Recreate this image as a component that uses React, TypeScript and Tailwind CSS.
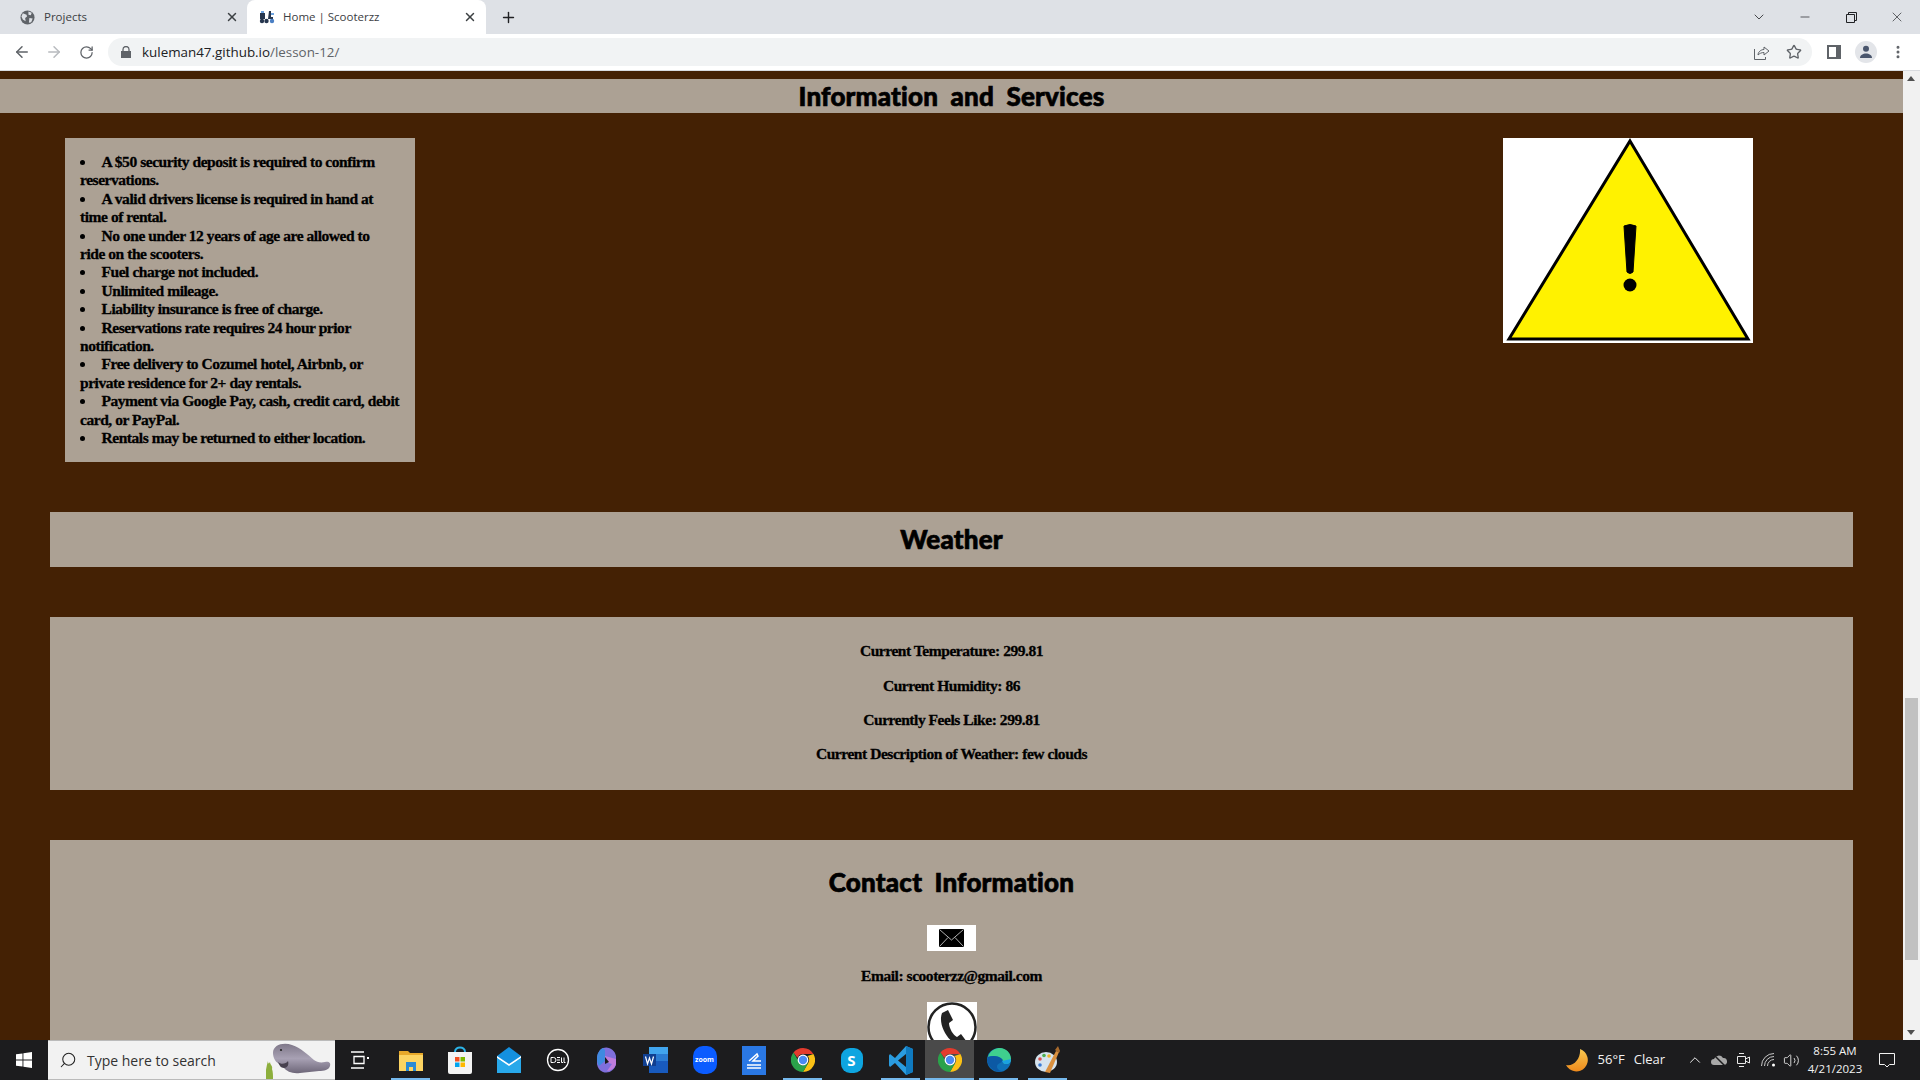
import React from 'react';
import {
  ArrowLeft,
  ArrowRight,
  ChevronDown,
  ChevronUp,
  Minus,
  MoreVertical,
  Plus,
  RotateCw,
  Search,
  Star,
  Volume2,
  X,
} from 'lucide-react';

const rules = [
  'A $50 security deposit is required to confirm reservations.',
  'A valid drivers license is required in hand at time of rental.',
  'No one under 12 years of age are allowed to ride\u00a0on the scooters.',
  'Fuel charge not included.',
  'Unlimited mileage.',
  'Liability insurance is free of charge.',
  'Reservations rate requires 24 hour prior notification.',
  'Free delivery to Cozumel hotel, Airbnb, or private residence for 2+ day rentals.',
  'Payment via Google Pay, cash, credit card, debit card, or PayPal.',
  'Rentals may be returned to either location.',
];

const weather = [
  'Current Temperature: 299.81',
  'Current Humidity: 86',
  'Currently Feels Like: 299.81',
  'Current Description of Weather: few clouds',
];

function ChromeIcon() {
  return (
    <svg width="24" height="24" viewBox="0 0 24 24">
      <path d="M12 0a12 12 0 0 1 10.400 6H12a6 6 0 0 0-5.600 3.800L2.500 4.600A12 12 0 0 1 12 0z" fill="#e33b2e" />
      <path d="M22.400 6A12 12 0 0 1 12 24l5.200-9A6 6 0 0 0 16.600 8z" fill="#fbc116" />
      <path d="M12 24A12 12 0 0 1 2.500 4.600l5 8.400a5 5 0 0 0 5 4.600l4.700-2.600z" fill="#2aa24a" />
      <circle cx="12" cy="12" r="5.400" fill="#fff" />
      <circle cx="12" cy="12" r="4.200" fill="#4a8af4" />
    </svg>
  );
}

function TaskIcon({ children, open, active }: { children: React.ReactNode; open?: boolean; active?: boolean }) {
  return (
    <div className={`relative flex h-10 w-[49px] items-center justify-center ${active ? 'bg-[#4a4a4a]' : ''}`}>
      {children}
      {open && <div className={`absolute bottom-0 h-[2px] bg-[#76b9ed] ${active ? 'inset-x-0' : 'inset-x-[5px]'}`} />}
    </div>
  );
}

function BrowserChrome() {
  return (
    <div className="shrink-0 font-['Open_Sans',sans-serif]">
      <div className="flex h-[34px] items-end bg-[#dee1e6] text-[11.500px] text-[#3c4043]">
        <div className="flex h-[34px] w-[247px] items-center pl-[20px] pr-[8px]">
          <svg width="15" height="15" viewBox="0 0 16 16">
            <circle cx="8" cy="8" r="7.500" fill="#5f6368" />
            <path d="M3 3.500 7 5l.5 2-2 1.500L6 12l-3-2-1.500-3zM9 1.500l3.500 1.500-1 2.500-2.500-.5zM10 8.500l3.500.5-1.500 4-2.500.5z" fill="#dee1e6" />
          </svg>
          <span className="ml-[9px] flex-1">Projects</span>
          <X size={14} strokeWidth={2.5} className="text-[#3c4043]" />
        </div>
        <div className="flex h-[34px] w-[239px] items-center rounded-t-[8px] bg-white pl-[12px] pr-[9px]">
          <svg width="16" height="14" viewBox="0 0 16 14">
            <path d="M1 3h5v6H1z" fill="#26364f" />
            <path d="M2 1h3v2H2z" fill="#6ea3e0" />
            <path d="M9 9h5V7h-2V1h-2z" fill="#26364f" />
            <path d="M12 3h3v2h-3z" fill="#6ea3e0" />
            <circle cx="3" cy="11" r="2.200" fill="#26364f" />
            <circle cx="7.500" cy="11" r="2.200" fill="#26364f" />
            <circle cx="13" cy="11" r="2.200" fill="#4a7fc4" />
          </svg>
          <span className="ml-[8px] flex-1">Home | Scooterzz</span>
          <X size={14} strokeWidth={2.5} className="text-[#3c4043]" />
        </div>
        <div className="ml-[14px] flex h-[34px] items-center">
          <Plus size={17} strokeWidth={2} className="text-[#202124]" />
        </div>
        <div className="ml-auto flex h-[34px] items-center text-[#202124]">
          <ChevronDown size={16} strokeWidth={1.2} className="mr-[31px]" />
          <Minus size={14} strokeWidth={1.2} className="mr-[33.500px]" />
          <svg width="11" height="11" viewBox="0 0 11 11" className="mr-[32.500px]" fill="none" stroke="#202124">
            <path d="M.5 2.500h8v8h-8zM2.500 2.500v-2h8v8h-2" />
          </svg>
          <X size={16} strokeWidth={1} className="mr-[15px]" />
        </div>
      </div>
      <div className="flex h-[37px] items-center border-b border-[#d9dbdf] bg-white">
        <ArrowLeft size={18} strokeWidth={2} className="ml-[13px] text-[#5f6368]" />
        <ArrowRight size={18} strokeWidth={2} className="ml-[14px] text-[#b8bbbf]" />
        <RotateCw size={15} strokeWidth={2} className="ml-[16px] text-[#5f6368]" />
        <div className="ml-[14px] flex h-[28px] flex-1 items-center rounded-full bg-[#f1f3f4]">
          <svg width="10" height="12" viewBox="0 0 10 12" className="ml-[13px]" fill="#5f6368">
            <path d="M0 5h10v7H0z" />
            <path d="M2 5V3.500a3 3 0 0 1 6 0V5" fill="none" stroke="#5f6368" strokeWidth="1.300" />
          </svg>
          <span className="ml-[11px] text-[13.400px] text-[#202124]">
            kuleman47.github.io<span className="text-[#5f6368]">/lesson-12/</span>
          </span>
          <svg width="16" height="15" viewBox="0 0 16 15" fill="none" stroke="#5f6368" className="ml-auto">
            <path d="M.5 4v10.500h11V12M4 10c0-3 3-5.500 6-5.500V2l5 4-5 4V7.500C7.500 7.500 5.500 8.500 4 10z" />
          </svg>
          <Star size={16} strokeWidth={2} className="ml-[16px] mr-[10px] text-[#5f6368]" />
        </div>
        <svg width="14" height="14" viewBox="0 0 14 14" className="ml-[15px]">
          <path d="M0 0h14v14H0z" fill="#5f6368" />
          <path d="M2 2h7v10H2z" fill="#fff" />
        </svg>
        <div className="ml-[14px] flex h-[22px] w-[22px] items-center justify-center rounded-full bg-[#e3e5e9]">
          <svg width="14" height="14" viewBox="0 0 14 14" fill="#4a566d">
            <circle cx="7" cy="3.800" r="3" />
            <path d="M1 13c0-3 3-4.500 6-4.500s6 1.500 6 4.500z" />
          </svg>
        </div>
        <MoreVertical size={16} strokeWidth={2.5} className="ml-[13px] mr-[14px] text-[#5f6368]" />
      </div>
    </div>
  );
}

function WarningSign() {
  return (
    <svg viewBox="0 0 250 205" className="ml-auto mr-[150px] h-[205px] w-[250px] shrink-0 bg-white">
      <polygon points="127,3 245,201 6,201" fill="#fff200" stroke="#000" strokeWidth="3" />
      <path d="M121 88q6-3 12 0l-3 46q-3 3-6 0z" fill="#000" stroke="#000" strokeWidth="1" />
      <circle cx="127" cy="147" r="6.500" fill="#000" />
    </svg>
  );
}

function Page() {
  const heading = "font-['Lato',sans-serif] font-black tracking-[0.2px] [word-spacing:6px] text-black [-webkit-text-stroke:0.7px_#000]";
  return (
    <div className="min-w-0 flex-1 overflow-hidden bg-[#442104] pt-[8px] font-['Liberation_Serif',serif] text-[15.500px] font-bold leading-[18.400px] tracking-[-0.45px] text-black [-webkit-text-stroke:0.3px_#000]">
      <div className={`flex h-[34px] items-center justify-center bg-[#aca194] text-[26px] ${heading}`}>
        Information and Services
      </div>

      <div className="mt-[25px] flex items-start pl-[65px]">
        <ul className="w-[350px] shrink-0 list-inside list-disc bg-[#aca194] px-[15px] pb-[14.600px] pt-[15px]">
          {rules.map((rule) => (
            <li key={rule}>{rule}</li>
          ))}
        </ul>
        <WarningSign />
      </div>

      <div className={`mx-[50px] mt-[50px] flex h-[55px] items-center justify-center bg-[#aca194] text-[26px] ${heading}`}>
        Weather
      </div>

      <div className="mx-[50px] mt-[50px] flex h-[173px] flex-col items-center gap-[16px] bg-[#aca194] pt-[25px]">
        {weather.map((line) => (
          <p key={line}>{line}</p>
        ))}
      </div>

      <div className="mx-[50px] mt-[50px] flex flex-col items-center bg-[#aca194] pt-[28px]">
        <h2 className={`text-[26px] leading-[28px] ${heading}`}>Contact Information</h2>
        <div className="mt-[29px] flex h-[26px] w-[49px] items-center justify-center bg-white">
          <svg width="25" height="18" viewBox="0 0 25 18">
            <path d="M0 0h25v18H0z" fill="#000" />
            <path d="M.5.500 12.500 11 24.500.500M.5 17.500 9 8.500M24.500 17.500 16 8.500" fill="none" stroke="#ddd" strokeWidth="0.800" />
          </svg>
        </div>
        <p className="mt-[16px]">Email: scooterzz@gmail.com</p>
        <div className="mt-[16px] h-[50px] w-[50px] shrink-0 bg-white">
          <svg width="50" height="50" viewBox="0 0 50 50">
            <circle cx="25" cy="25" r="23.500" fill="#fff" stroke="#222" strokeWidth="2.500" />
            <path d="M15 11l6-3 5 10-4 3c0 5 4 12 8 14l4-3 6 8-5 4C24 44 10 24 15 11z" fill="#222" />
          </svg>
        </div>
      </div>
    </div>
  );
}

function Scrollbar() {
  return (
    <div className="relative w-[17px] shrink-0 bg-[#f1f1f1]">
      <div className="absolute left-[4px] top-[5px] h-0 w-0 border-x-[4px] border-b-[5px] border-x-transparent border-b-[#505050]" />
      <div className="absolute left-[2px] right-[2px] top-[627px] h-[262px] bg-[#c1c1c1]" />
      <div className="absolute bottom-[5px] left-[4px] h-0 w-0 border-x-[4px] border-t-[5px] border-x-transparent border-t-[#505050]" />
    </div>
  );
}

function Taskbar() {
  return (
    <div className="flex h-10 shrink-0 items-center bg-[#1c1c1e] font-['Open_Sans',sans-serif] text-white">
      <div className="flex h-10 w-[48px] items-center justify-center">
        <svg width="16" height="16" viewBox="0 0 16 16" fill="#fff">
          <path d="M0 2.300 6.500 1.400v6.200H0zM7.400 1.300 16 0v7.600H7.400zM0 8.400h6.500v6.200L0 13.700zM7.400 8.400H16V16l-8.600-1.300z" />
        </svg>
      </div>
      <div className="flex h-10 w-[287px] items-center border-y border-[#bbb] bg-[#f2f2f2] pl-[11px] text-[14px] text-[#333]">
        <Search size={18} strokeWidth={1.4} className="-scale-x-100 text-[#222]" />
        <span className="ml-[10px]">Type here to search</span>
        <svg width="66" height="38" viewBox="0 0 66 38" className="ml-auto mr-[3px] self-end">
          <defs>
            <linearGradient id="manatee" x1="0" y1="0" x2="0" y2="1">
              <stop offset="0" stopColor="#7f7889" />
              <stop offset="0.5" stopColor="#a8a1b4" />
              <stop offset="1" stopColor="#6d6678" />
            </linearGradient>
          </defs>
          <path d="M0 38c-1-5 0-11 2-18 0 3 1 3 2 1 0 3 3 4 2 7 1 3 1 6 1 10z" fill="#8cae3c" />
          <path d="M7 12C7 4 17 1 26 4c9 3 15 9 22 15 3 2 6 3 11 2 4-1 6 1 5 4-1 4-6 5-11 5-6 1-13 1-19 2-7 1-13-1-17-6-2 1-3-1-3-3-4-1-7-6-7-11z" fill="url(#manatee)" />
          <path d="M12 21c3 3 8 2 10-1 1 3 0 7-4 7-3 0-5-3-6-6z" fill="#47414f" />
          <circle cx="15" cy="9" r="1.100" fill="#222" />
        </svg>
      </div>
      <div className="flex h-10 w-[51px] items-center justify-center pr-[2px]">
        <svg width="18" height="18" viewBox="0 0 18 18" fill="none" stroke="#fff" strokeWidth="1.300">
          <path d="M0 1h13M3 5.500h10v7H3zM0 17h13" />
          <path d="M16 6h2v2h-2z" fill="#fff" stroke="none" />
        </svg>
      </div>
      <TaskIcon open>
        <svg width="24" height="22" viewBox="0 0 24 22">
          <path d="M0 2h9l2 2h13v18H0z" fill="#e8a92a" />
          <path d="M0 6h24v16H0z" fill="#fcd462" />
          <path d="M7 13h10v9h-3v-4h-4v4H7z" fill="#2a8ad4" />
        </svg>
      </TaskIcon>
      <TaskIcon>
        <svg width="24" height="28" viewBox="0 0 24 28">
          <path d="M7 6c0-6 10-6 10 0" fill="none" stroke="#2bb4e8" strokeWidth="2" />
          <path d="M0 6h24v20a2 2 0 0 1-2 2H2a2 2 0 0 1-2-2z" fill="#f3f3f3" />
          <path d="M7 11h4.500v4.500H7z" fill="#f25022" />
          <path d="M12.500 11H17v4.500h-4.500z" fill="#7fba00" />
          <path d="M7 16.500h4.500V21H7z" fill="#00a4ef" />
          <path d="M12.500 16.500H17V21h-4.500z" fill="#ffb900" />
        </svg>
      </TaskIcon>
      <TaskIcon>
        <svg width="24" height="26" viewBox="0 0 24 26">
          <path d="M0 9 12 0l12 9v17H0z" fill="#1490df" />
          <path d="M0 9l12 8 12-8 0 2-12 9-12-9z" fill="#fff" />
          <path d="M0 11l12 8 12-8v15H0z" fill="#28a8ea" />
        </svg>
      </TaskIcon>
      <TaskIcon>
        <svg width="24" height="24" viewBox="0 0 24 24">
          <circle cx="12" cy="12" r="10.500" fill="none" stroke="#fff" strokeWidth="1.300" />
          <path d="M5 9.500h2.500a2.500 2.500 0 0 1 0 5H5zM11 9.500h3M11 12h3M11 14.500h3M15.500 9.500v5h1.500M18 9.500v5h1.500" fill="none" stroke="#fff" strokeWidth="1" />
        </svg>
      </TaskIcon>
      <TaskIcon>
        <svg width="20" height="26" viewBox="0 0 20 26">
          <path d="M6 1c6-2 12 2 13 8v8c-1 6-7 10-13 8C1 23-1 17 0 12 0 7 2 3 6 1z" fill="#7f6fdc" />
          <path d="M6 1C2 3 0 7 0 12c0 3 1 5 2 7l6-5V3z" fill="#3f8ae0" />
          <path d="M8 9l11 3v5c-1 4-5 7-9 7l5-7-7-2z" fill="#c07cdc" />
          <path d="M8 10l4 5-4 2z" fill="#1c1c1e" />
        </svg>
      </TaskIcon>
      <TaskIcon>
        <svg width="25" height="26" viewBox="0 0 25 26">
          <path d="M6 0h19v26H6z" fill="#185abd" />
          <path d="M6 0h19v7H6z" fill="#41a5ee" />
          <path d="M6 7h19v7H6z" fill="#2b7cd3" />
          <path d="M0 7h13v12H0z" fill="#103f91" />
          <path d="M2.500 9.500 4.500 17 6.500 11l2 6 2-7.500" fill="none" stroke="#fff" strokeWidth="1.200" />
        </svg>
      </TaskIcon>
      <TaskIcon>
        <div className="flex h-[28px] w-[24px] items-center justify-center rounded-[10px] bg-[#0b5cff] text-[7px] font-bold lowercase text-white">
          zoom
        </div>
      </TaskIcon>
      <TaskIcon>
        <svg width="24" height="29" viewBox="0 0 24 29">
          <path d="M0 0h24v29H0z" fill="#2a78e4" />
          <path d="M5 19h14M5 22h14M7 15l8-7 1 2-5 5h8" fill="none" stroke="#fff" strokeWidth="1.500" />
        </svg>
      </TaskIcon>
      <TaskIcon open>
        <ChromeIcon />
      </TaskIcon>
      <TaskIcon>
        <div className="flex h-[25px] w-[22px] items-center justify-center rounded-[9px] bg-[#0ea5e0] text-[15px] font-bold text-white">
          S
        </div>
      </TaskIcon>
      <TaskIcon open>
        <svg width="24" height="29" viewBox="0 0 24 29">
          <path d="M17 0l7 3v23l-7 3L6 17l-5 4-1-1.500v-10L1 8l5 4z" fill="#2a9ce0" />
          <path d="M17 8v13l-8-6.500z" fill="#1c1c1e" />
          <path d="M17 0l7 3v23l-7 3z" fill="#0f7ac0" />
        </svg>
      </TaskIcon>
      <TaskIcon open active>
        <ChromeIcon />
      </TaskIcon>
      <TaskIcon open>
        <svg width="24" height="24" viewBox="0 0 24 24">
          <circle cx="12" cy="12" r="12" fill="#0f71b8" />
          <path d="M1 9C3 2 9 0 13 0c6 0 11 5 11 11 0 3-2 5-5 5-4 0-2-3-4-5-3-3-9-4-14-2z" fill="#3fcf8e" />
          <path d="M1 9c5-2 11-1 14 2 1 1 0 3-2 4-3 1-4 4-2 6 1 1 3 3 6 2-8 3-16-3-17-11z" fill="#0c59a4" />
          <path d="M24 11c0 3-2 5-5 5-2 0-3-1-4-3" fill="#1ba1e2" />
        </svg>
      </TaskIcon>
      <TaskIcon open>
        <svg width="26" height="28" viewBox="0 0 26 28">
          <ellipse cx="11" cy="16" rx="11" ry="10" fill="#d6e4ee" />
          <circle cx="5" cy="13" r="1.800" fill="#d9534f" />
          <circle cx="9" cy="9.500" r="1.800" fill="#4caf50" />
          <circle cx="14" cy="10" r="1.800" fill="#f0b429" />
          <circle cx="5" cy="19" r="1.800" fill="#3a7bd5" />
          <path d="M10 26 21 5l3 1-9 21z" fill="#d9903f" />
          <path d="M20 4l3-4 2 5-1 2z" fill="#a86a2c" />
        </svg>
      </TaskIcon>

      <div className="ml-auto flex h-10 items-center text-[13px] text-[#f2f2f2]">
        <svg width="23" height="23" viewBox="0 0 23 23" className="mr-[9px]">
          <defs>
            <linearGradient id="moon" x1="0" y1="0" x2="0" y2="1">
              <stop offset="0" stopColor="#f8c850" />
              <stop offset="1" stopColor="#ee8a1c" />
            </linearGradient>
          </defs>
          <path d="M14 0a11.500 11.500 0 1 1-14 16c8 2 15-7 14-16z" fill="url(#moon)" />
        </svg>
        <span>56°F</span>
        <span className="ml-[9px]">Clear</span>
        <ChevronUp size={18} strokeWidth={1.3} className="ml-[21px]" />
        <svg width="16" height="14" viewBox="0 0 16 14" className="ml-[7px]">
          <path d="M3 12a3 3 0 0 1 0-6 5 5 0 0 1 9-1 3.500 3.500 0 0 1 1 7z" fill="#a8a8a8" />
          <path d="M2 1l12 12" stroke="#1c1c1e" strokeWidth="1.500" />
        </svg>
        <svg width="13" height="16" viewBox="0 0 13 16" fill="none" stroke="#e8e8e8" className="ml-[10px]">
          <path d="M.5 4.500h8v7h-8zM8.500 7l4-2v6l-4-2zM2 1.500h5M2 14.500h5" />
        </svg>
        <svg width="15" height="14" viewBox="0 0 15 14" fill="none" stroke="#c8c8c8" className="ml-[11px]">
          <path d="M.5 13a12.500 12.500 0 0 1 12.500-12.500M3.500 13a9.500 9.500 0 0 1 9.500-9.500M6.500 13A6.500 6.500 0 0 1 13 6.500" />
          <circle cx="12.500" cy="12" r="1.500" fill="#fff" stroke="none" />
        </svg>
        <Volume2 size={17} strokeWidth={1.2} className="ml-[7px]" />
        <div className="ml-[4px] flex w-[62px] flex-col items-center text-[11.500px] leading-[18px]">
          <span>8:55 AM</span>
          <span>4/21/2023</span>
        </div>
        <svg width="16" height="16" viewBox="0 0 16 16" fill="none" stroke="#f2f2f2" className="ml-[13px] mr-[25px]">
          <path d="M.5 1.500h15v11h-5l-2.500 2.500-2.500-2.500h-5z" />
        </svg>
      </div>
    </div>
  );
}

export default function App() {
  return (
    <div className="flex h-screen w-full flex-col overflow-hidden">
      <BrowserChrome />
      <div className="flex min-h-0 flex-1">
        <Page />
        <Scrollbar />
      </div>
      <Taskbar />
    </div>
  );
}
